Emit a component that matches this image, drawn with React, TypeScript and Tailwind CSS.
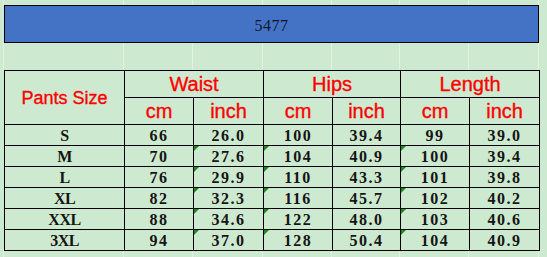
// Pants size chart on a spreadsheet-green sheet
const widths = [120, 69, 70, 69, 68, 69, 70]

const rows = [
  ['S', '66', '26.0', '100', '39.4', '99', '39.0'],
  ['M', '70', '27.6', '104', '40.9', '100', '39.4'],
  ['L', '76', '29.9', '110', '43.3', '101', '39.8'],
  ['XL', '82', '32.3', '116', '45.7', '102', '40.2'],
  ['XXL', '88', '34.6', '122', '48.0', '103', '40.6'],
  ['3XL', '94', '37.0', '128', '50.4', '104', '40.9'],
]

// cells that carry the little green "number stored as text" flag
const flagged = [2, 3, 5]

function GridStrip({ h }: { h: string }) {
  return (
    <div className={`flex ${h}`}>
      <div className="w-[4px] shrink-0 border-r border-[#e2f2e2]" />
      {widths.map((w, i) => (
        <div key={i} className="shrink-0 border-r border-[#e2f2e2]" style={{ width: w }} />
      ))}
    </div>
  )
}

export default function App() {
  const head = 'border border-black text-[#ff0000] font-normal leading-none [-webkit-text-stroke:0.35px_#ff0000]'
  return (
    <div className="w-[547px] h-[257px] bg-[#cde9cf] overflow-hidden font-['Liberation_Sans',sans-serif]">
      <GridStrip h="h-[5px]" />
      <div className="ml-[4px] w-[535px] h-[38px] bg-[#4472c4] border border-black flex items-center justify-center pt-[3px]">
        <span className="font-['Liberation_Serif',serif] text-[16px] tracking-[0.5px] text-[#101830]">5477</span>
      </div>
      <GridStrip h="h-[27px]" />
      <table className="ml-[4px] w-[535px] table-fixed border-collapse">
        <colgroup>
          {widths.map((w, i) => (
            <col key={i} style={{ width: w }} />
          ))}
        </colgroup>
        <thead>
          <tr className="h-[27px]">
            <th rowSpan={2} className={`${head} text-[18px]`}>Pants Size</th>
            <th colSpan={2} className={`${head} text-[20px]`}>Waist</th>
            <th colSpan={2} className={`${head} text-[20px]`}>Hips</th>
            <th colSpan={2} className={`${head} text-[20px]`}>Length</th>
          </tr>
          <tr className="h-[27px]">
            {['cm', 'inch', 'cm', 'inch', 'cm', 'inch'].map((t, i) => (
              <th key={i} className={`${head} text-[20px]`}>{t}</th>
            ))}
          </tr>
        </thead>
        <tbody>
          {rows.map((r, ri) => (
            <tr key={ri} className="h-[21px]">
              {r.map((c, ci) => (
                <td
                  key={ci}
                  className={`relative border border-black p-0 text-center align-middle font-['Liberation_Serif',serif] font-bold text-[16px] leading-none text-[#151515] pt-[2px] ${ci === 0 ? 'tracking-[-0.5px]' : 'tracking-[1.5px]'}`}
                >
                  {ri > 0 && flagged.includes(ci) && (
                    <span className="absolute left-0 top-0 w-0 h-0 border-t-[5px] border-r-[5px] border-t-[#1e8a1e] border-r-transparent" />
                  )}
                  {c}
                </td>
              ))}
            </tr>
          ))}
        </tbody>
      </table>
      <GridStrip h="h-[10px]" />
    </div>
  )
}
